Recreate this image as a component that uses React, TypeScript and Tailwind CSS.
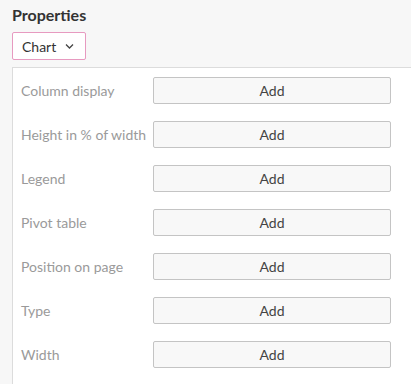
import React from "react";

const rows = [
  "Column display",
  "Height in % of width",
  "Legend",
  "Pivot table",
  "Position on page",
  "Type",
  "Width",
];

export default function App() {
  return (
    <div
      className="w-[411px] h-[384px] overflow-hidden bg-[#f7f7f7] pl-[12px] pt-[4px]"
      style={{ fontFamily: "Lato, 'Open Sans', sans-serif" }}
    >
      <div className="text-[16px] font-bold text-[#333] leading-[21px]">Properties</div>
      <div className="mt-[7px] flex h-[28px] w-[74px] items-center gap-[8px] rounded-[2px] border border-[#e79ac0] bg-white pl-[9px] text-[14px] text-[#333]">
        <span>Chart</span>
        <svg width="11" height="10" viewBox="0 0 11 10" fill="none" stroke="#444" strokeWidth="1.3">
          <path d="M2 3.5 L5.5 7 L9 3.5" />
        </svg>
      </div>
      <div className="mt-[7px] h-[400px] border-l border-t border-[#dcdcdc] bg-white pl-[8px] pt-[9px]">
        {rows.map((r) => (
          <div key={r} className="mb-[17px] flex h-[27px] items-center">
            <div className="w-[132px] text-[14px] text-[#9a9a9a]">{r}</div>
            <div className="flex h-[27px] w-[238px] items-center justify-center rounded-[2px] border border-[#c4c4c4] bg-[#f8f8f8] text-[14px] text-[#444]">
              Add
            </div>
          </div>
        ))}
      </div>
    </div>
  );
}
